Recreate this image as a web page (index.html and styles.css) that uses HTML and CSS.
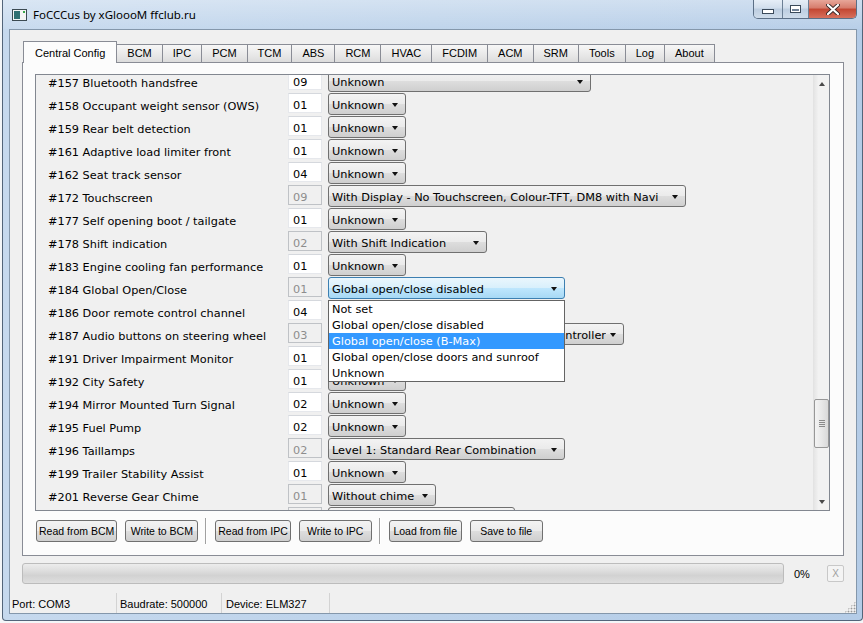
FILE: index.html
```html
<!DOCTYPE html>
<html>
<head>
<meta charset="utf-8">
<link rel="stylesheet" href="styles.css">
</head>
<body>
<div class="window">
  <div class="titlebar">
    <svg class="app-icon" width="15" height="12" viewBox="0 0 15 12">
      <rect x="0.5" y="0.5" width="14" height="11" fill="#f4f4f4" stroke="#3c4a52"/>
      <rect x="2" y="2" width="6" height="8" fill="#2f6f72"/>
      <rect x="11" y="2" width="2" height="2" fill="#3aa64a"/>
    </svg>
    <span class="title">FoCCCus by xGloooM ffclub.ru</span>
    <div class="caption">
      <div class="cap-btn cap-min"><span class="min-bar"></span></div>
      <div class="cap-btn cap-max"><span class="max-box"></span></div>
      <div class="cap-btn cap-close">
        <svg width="14" height="11" viewBox="0 0 14 11"><path d="M2 1 L12 10 M12 1 L2 10" stroke="#3b2a2a" stroke-width="4" stroke-linecap="round"/><path d="M2 1 L12 10 M12 1 L2 10" stroke="#ffffff" stroke-width="2.2" stroke-linecap="round"/></svg>
      </div>
    </div>
  </div>
  <div class="client">
    <div class="tabs">
      <div class="tab active">Central Config</div>
      <div class="tab">BCM</div>
      <div class="tab">IPC</div>
      <div class="tab">PCM</div>
      <div class="tab">TCM</div>
      <div class="tab">ABS</div>
      <div class="tab">RCM</div>
      <div class="tab">HVAC</div>
      <div class="tab">FCDIM</div>
      <div class="tab">ACM</div>
      <div class="tab">SRM</div>
      <div class="tab">Tools</div>
      <div class="tab">Log</div>
      <div class="tab">About</div>
    </div>
    <div class="pane">
      <div class="scrollarea">
        <div class="viewport">
          <div class="rows">
            <div class="row"><span class="lbl">#157 Bluetooth handsfree</span><span class="hex">09</span><span class="combo w-157"><span class="ctext">Unknown</span><span class="arrow"></span></span></div>
            <div class="row"><span class="lbl">#158 Occupant weight sensor (OWS)</span><span class="hex">01</span><span class="combo w-unk"><span class="ctext">Unknown</span><span class="arrow"></span></span></div>
            <div class="row"><span class="lbl">#159 Rear belt detection</span><span class="hex">01</span><span class="combo w-unk"><span class="ctext">Unknown</span><span class="arrow"></span></span></div>
            <div class="row"><span class="lbl">#161 Adaptive load limiter front</span><span class="hex">01</span><span class="combo w-unk"><span class="ctext">Unknown</span><span class="arrow"></span></span></div>
            <div class="row"><span class="lbl">#162 Seat track sensor</span><span class="hex">04</span><span class="combo w-unk"><span class="ctext">Unknown</span><span class="arrow"></span></span></div>
            <div class="row"><span class="lbl">#172 Touchscreen</span><span class="hex dis">09</span><span class="combo w-172"><span class="ctext">With Display - No Touchscreen, Colour-TFT, DM8 with Navi</span><span class="arrow"></span></span></div>
            <div class="row"><span class="lbl">#177 Self opening boot / tailgate</span><span class="hex">01</span><span class="combo w-unk"><span class="ctext">Unknown</span><span class="arrow"></span></span></div>
            <div class="row"><span class="lbl">#178 Shift indication</span><span class="hex dis">02</span><span class="combo w-178"><span class="ctext">With Shift Indication</span><span class="arrow"></span></span></div>
            <div class="row"><span class="lbl">#183 Engine cooling fan performance</span><span class="hex">01</span><span class="combo w-unk"><span class="ctext">Unknown</span><span class="arrow"></span></span></div>
            <div class="row"><span class="lbl">#184 Global Open/Close</span><span class="hex dis">01</span><span class="combo w-184 focus"><span class="ctext">Global open/close disabled</span><span class="arrow"></span></span></div>
            <div class="row"><span class="lbl">#186 Door remote control channel</span><span class="hex">04</span><span class="combo w-unk"><span class="ctext">Unknown</span><span class="arrow"></span></span></div>
            <div class="row"><span class="lbl">#187 Audio buttons on steering wheel</span><span class="hex dis">03</span><span class="combo w-187"><span class="ctext tail"><span>Audio buttons with Remote Audio Controller</span></span><span class="arrow"></span></span></div>
            <div class="row"><span class="lbl">#191 Driver Impairment Monitor</span><span class="hex">01</span><span class="combo w-unk"><span class="ctext">Unknown</span><span class="arrow"></span></span></div>
            <div class="row"><span class="lbl">#192 City Safety</span><span class="hex">01</span><span class="combo w-unk"><span class="ctext">Unknown</span><span class="arrow"></span></span></div>
            <div class="row"><span class="lbl">#194 Mirror Mounted Turn Signal</span><span class="hex">02</span><span class="combo w-unk"><span class="ctext">Unknown</span><span class="arrow"></span></span></div>
            <div class="row"><span class="lbl">#195 Fuel Pump</span><span class="hex">02</span><span class="combo w-unk"><span class="ctext">Unknown</span><span class="arrow"></span></span></div>
            <div class="row"><span class="lbl">#196 Taillamps</span><span class="hex dis">02</span><span class="combo w-196"><span class="ctext">Level 1: Standard Rear Combination</span><span class="arrow"></span></span></div>
            <div class="row"><span class="lbl">#199 Trailer Stability Assist</span><span class="hex">01</span><span class="combo w-unk"><span class="ctext">Unknown</span><span class="arrow"></span></span></div>
            <div class="row"><span class="lbl">#201 Reverse Gear Chime</span><span class="hex dis">01</span><span class="combo w-201"><span class="ctext">Without chime</span><span class="arrow"></span></span></div>
            <div class="row"><span class="lbl">#202 Rear View Camera</span><span class="hex dis">01</span><span class="combo w-202"><span class="ctext">Without Rear View Camera</span><span class="arrow"></span></span></div>
          </div>
        </div>
        <div class="vscroll">
          <div class="sb-arrow"><span class="tri-up"></span></div>
          <div class="sb-track"><div class="sb-thumb" style="margin-top:307px"><span class="grip"></span><span class="grip"></span><span class="grip"></span><span class="grip"></span></div></div>
          <div class="sb-arrow"><span class="tri-down"></span></div>
        </div>
        <div class="popup">
          <div class="pitem">Not set</div>
          <div class="pitem">Global open/close disabled</div>
          <div class="pitem sel">Global open/close (B-Max)</div>
          <div class="pitem">Global open/close doors and sunroof</div>
          <div class="pitem">Unknown</div>
        </div>
      </div>
      <div class="buttons">
        <span class="btn">Read from BCM</span>
        <span class="btn">Write to BCM</span>
        <span class="vsep"></span>
        <span class="btn">Read from IPC</span>
        <span class="btn">Write to IPC</span>
        <span class="vsep"></span>
        <span class="btn">Load from file</span>
        <span class="btn">Save to file</span>
      </div>
    </div>
    <div class="progress-row">
      <div class="progress"></div>
      <span class="pct">0%</span>
      <span class="xbtn">X</span>
    </div>
    <div class="statusbar">
      <span class="sitem s1">Port: COM3</span>
      <span class="sitem s2">Baudrate: 500000</span>
      <span class="sitem s3">Device: ELM327</span>
      <span class="grip-corner"></span>
    </div>
  </div>
</div>
</body>
</html>
```

FILE: styles.css
```css
html, body {
  margin: 0;
  padding: 0;
}
body {
  width: 863px;
  height: 623px;
  overflow: hidden;
  background: #f4f6f8;
  font-family: "DejaVu Sans", "Liberation Sans", sans-serif;
  font-size: 11.3px;
  color: #000;
}
.window {
  margin-left: 2px;
  width: 861px;
  height: 621px;
  box-sizing: border-box;
  border: 1px solid #53657a;
  border-top: none;
  border-radius: 0 0 4px 4px;
  background: linear-gradient(to right, #c6d9ee, #bcd2ea 50%, #b4cce7);
  display: flex;
  flex-direction: column;
}
.titlebar {
  height: 29px;
  flex: none;
  display: flex;
  align-items: flex-start;
  background: linear-gradient(to bottom, rgba(255,255,255,0.35), rgba(255,255,255,0.05));
}
.app-icon {
  margin: 9px 0 0 9px;
  flex: none;
}
.title {
  margin: 7px 0 0 6px;
  font-family: "Noto Sans", "Open Sans", sans-serif;
  font-size: 11.5px;
  color: #000;
  line-height: 16px;
}
.caption {
  margin-left: auto;
  margin-right: 5px;
  display: flex;
  height: 19px;
  border: 1px solid #5b6f86;
  border-top: none;
  border-radius: 0 0 5px 5px;
  overflow: hidden;
  box-sizing: border-box;
}
.cap-btn {
  display: flex;
  align-items: center;
  justify-content: center;
  height: 18px;
}
.cap-min {
  width: 28px;
  border-right: 1px solid #6b7f95;
  background: linear-gradient(to bottom, #e6eef7, #d1deec 45%, #bccde0 50%, #cfdcea);
}
.cap-max {
  width: 25px;
  border-right: 1px solid #6b7f95;
  background: linear-gradient(to bottom, #e6eef7, #d1deec 45%, #bccde0 50%, #cfdcea);
}
.cap-close {
  width: 47px;
  background: linear-gradient(to bottom, #e7a699, #d67b6b 45%, #c34632 50%, #d7705d);
}
.min-bar {
  width: 10px;
  height: 3px;
  margin-top: 5px;
  background: #fff;
  border: 1px solid #3b4a5a;
}
.max-box {
  width: 9px;
  height: 6px;
  border: 1px solid #3b4a5a;
  box-shadow: inset 0 0 0 1px #fff, inset 0 2px 0 1px #fff;
  background: #6f8196;
}
.client {
  flex: none;
  height: 585px;
  margin: 0 5px 0 6px;
  box-sizing: border-box;
  border: 1px solid #8497ab;
  background: #f0f0f0;
  display: flex;
  flex-direction: column;
}
.tabs {
  display: flex;
  align-items: flex-end;
  height: 21px;
  margin: 11px 0 0 13px;
  flex: none;
  font-family: "Liberation Sans", Arial, sans-serif;
  font-size: 11px;
}
.tab {
  height: 18px;
  box-sizing: border-box;
  padding: 0 10px;
  line-height: 17px;
  border: 1px solid #898c95;
  border-bottom: none;
  border-left: none;
  background: linear-gradient(to bottom, #f7f7f7, #e9e9e9 55%, #dcdcdc);
  white-space: nowrap;
}
.tab.active {
  height: 22px;
  margin-bottom: -1px;
  border-left: 1px solid #898c95;
  background: #fcfcfc;
  line-height: 22px;
  padding: 0 11px;
  position: relative;
  z-index: 1;
}
.pane {
  margin: 0 12px;
  height: 494px;
  box-sizing: border-box;
  border: 1px solid #898c95;
  background: #fcfcfc;
  padding: 11px 13px 0 12px;
  flex: none;
}
.scrollarea {
  position: relative;
  height: 437px;
  box-sizing: border-box;
  border: 1px solid #828790;
  background: #f0f0f0;
  display: flex;
}
.viewport {
  flex: 1;
  overflow: hidden;
}
.rows {
  margin-top: -5px;
  padding-left: 12px;
}
.row {
  display: flex;
  height: 23px;
  align-items: flex-start;
}
.lbl {
  width: 240px;
  flex: none;
  box-sizing: border-box;
  padding-top: 2px;
  line-height: 24px;
  height: 23px;
  white-space: nowrap;
}
.hex {
  width: 34px;
  height: 20px;
  box-sizing: border-box;
  border: 1px solid #e6e8ec;
  border-top-color: #d5d8dd;
  background: #fff;
  padding: 3px 0 0 4px;
  line-height: 17px;
  flex: none;
}
.hex.dis {
  background: #f0f0f0;
  border-color: #bfc2c6;
  color: #8d8d8d;
}
.combo {
  margin-left: 6px;
  height: 22px;
  box-sizing: border-box;
  border: 1px solid #707070;
  border-radius: 3px;
  background: linear-gradient(to bottom, #f3f3f3, #ebebeb 48%, #dddddd 52%, #cfcfcf);
  display: flex;
  align-items: center;
  padding-left: 3px;
  flex: none;
  overflow: hidden;
  white-space: nowrap;
}
.combo.focus {
  border-color: #3c7fb1;
  background: linear-gradient(to bottom, #eaf6fd, #d9f0fc 48%, #bee6fd 52%, #a7d9f5);
}
.ctext {
  flex: 1;
  min-width: 0;
  overflow: hidden;
  white-space: nowrap;
  line-height: 18px;
  padding-top: 3px;
  height: 20px;
  box-sizing: border-box;
  align-self: flex-start;
}
.ctext.tail {
  display: flex;
  justify-content: flex-end;
}
.ctext.tail span {
  flex: none;
}
.arrow {
  flex: none;
  width: 0;
  height: 0;
  border-left: 3.5px solid transparent;
  border-right: 3.5px solid transparent;
  border-top: 4px solid #111;
  margin: 1px 7px 0 4px;
}
.w-unk { width: 78px; }
.w-157 { width: 263px; }
.w-172 { width: 358px; }
.w-178 { width: 159px; }
.w-184 { width: 237px; }
.w-187 { width: 296px; }
.w-196 { width: 237px; }
.w-201 { width: 108px; }
.w-202 { width: 187px; }
.vscroll {
  width: 16px;
  flex: none;
  display: flex;
  flex-direction: column;
  background: linear-gradient(to right, #e5e5e5, #f2f2f2 30%, #f2f2f2);
  border-left: 1px solid #e3e3e3;
  box-sizing: border-box;
}
.sb-arrow {
  height: 17px;
  flex: none;
  display: flex;
  align-items: center;
  justify-content: center;
}
.tri-up {
  width: 0; height: 0;
  border-left: 3.5px solid transparent;
  border-right: 3.5px solid transparent;
  border-bottom: 4px solid #4a4a4a;
}
.tri-down {
  width: 0; height: 0;
  border-left: 3.5px solid transparent;
  border-right: 3.5px solid transparent;
  border-top: 4px solid #4a4a4a;
}
.sb-track {
  flex: 1;
}
.sb-thumb {
  height: 49px;
  box-sizing: border-box;
  border: 1px solid #979797;
  border-radius: 2px;
  background: linear-gradient(to right, #f3f3f3, #e8e8e8 50%, #d9d9d9);
  display: flex;
  flex-direction: column;
  align-items: center;
  justify-content: center;
  gap: 1px;
}
.grip {
  width: 6px;
  height: 1px;
  background: #8a8a8a;
}
.popup {
  position: absolute;
  left: 292px;
  top: 225px;
  width: 237px;
  height: 82px;
  box-sizing: border-box;
  border: 1px solid #646464;
  background: #fff;
  z-index: 5;
}
.pitem {
  height: 16px;
  line-height: 17px;
  padding-left: 3px;
  white-space: nowrap;
}
.pitem.sel {
  background: #3399ff;
  color: #fff;
}
.buttons {
  margin: 9px 0 0 1px;
  display: flex;
  align-items: center;
  height: 22px;
  font-family: "Liberation Sans", Arial, sans-serif;
  font-size: 10.5px;
}
.btn {
  height: 22px;
  min-width: 73px;
  box-sizing: border-box;
  border: 1px solid #707070;
  border-radius: 3px;
  background: linear-gradient(to bottom, #f3f3f3, #ebebeb 48%, #dddddd 52%, #cfcfcf);
  padding: 0 2px;
  line-height: 20px;
  text-align: center;
  margin-right: 8px;
  white-space: nowrap;
}
.vsep {
  width: 1px;
  height: 26px;
  background: #a0a0a0;
  border-right: 1px solid #fff;
  margin: 0 8px 0 -1px;
}
.progress-row {
  display: flex;
  align-items: center;
  margin: 7px 0 0 12px;
  height: 21px;
  font-family: "Liberation Sans", Arial, sans-serif;
  font-size: 11px;
}
.progress {
  width: 762px;
  height: 21px;
  box-sizing: border-box;
  border: 1px solid #bcbcbc;
  border-radius: 3px;
  background: linear-gradient(to bottom, #ececec, #dcdcdc 40%, #d2d2d2 60%, #dedede);
}
.pct {
  margin-left: 10px;
  width: 33px;
}
.xbtn {
  width: 17px;
  height: 17px;
  box-sizing: border-box;
  border: 1px solid #c8c8c8;
  border-radius: 2px;
  color: #a0a0a0;
  font-size: 10px;
  text-align: center;
  line-height: 15px;
  background: #f4f4f4;
}
.statusbar {
  display: flex;
  align-items: stretch;
  margin-top: auto;
  height: 20px;
  font-family: "Liberation Sans", Arial, sans-serif;
  font-size: 11px;
}
.sitem {
  box-sizing: border-box;
  border-right: 1px solid #d3d3d3;
  line-height: 22px;
  padding-left: 2px;
  white-space: nowrap;
}
.s1 { width: 107px; }
.s2 { width: 105px; padding-left: 3px; }
.s3 { width: 108px; padding-left: 4px; }
.grip-corner {
  margin-left: auto;
  width: 12px;
  height: 12px;
  align-self: flex-end;
  background-image: radial-gradient(circle, #9a9a9a 0.8px, transparent 1.1px);
  background-size: 3px 3px;
  clip-path: polygon(100% 0, 100% 100%, 0 100%);
}
```
